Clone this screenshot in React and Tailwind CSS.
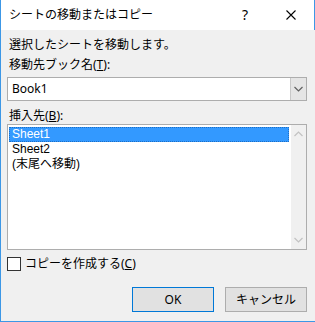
import React from "react";

const font = { fontFamily: '"Noto Sans", "Noto Sans CJK JP", sans-serif' };
const listFont = { fontFamily: '"Liberation Sans", "Noto Sans CJK JP", sans-serif' };

const Chevron = ({ up, color }) => (
  <svg width="9" height="6" viewBox="0 0 9 6" fill="none">
    <path
      d={up ? "M0.5 5L4.5 1L8.5 5" : "M0.5 1L4.5 5L8.5 1"}
      stroke={color}
      strokeWidth="1.2"
    />
  </svg>
);

const App = () => {
  return (
    <div
      className="w-[315px] h-[322px] flex flex-col bg-[#f0f0f0] text-[12px] text-black border-l border-b border-[#3c97e6] overflow-hidden"
      style={font}
    >
      {/* Title bar */}
      <div className="h-[30px] bg-white flex items-center border-r border-[#3c97e6] shrink-0">
        <span className="pl-[8px] leading-[16px] flex-1">シートの移動またはコピー</span>
        <span className="w-[12px] text-[14px] leading-[16px] mr-[32px]">?</span>
        <svg className="mr-[18px]" width="10" height="10" viewBox="0 0 10 10">
          <path d="M0.5 0.5L9.5 9.5M9.5 0.5L0.5 9.5" stroke="#000" strokeWidth="1.1" />
        </svg>
      </div>

      {/* Body */}
      <div className="flex flex-col pl-[6px] pr-[8px]">
        <div className="mt-[7px] leading-[16px] pl-[2px]">選択したシートを移動します。</div>
        <div className="mt-[4px] leading-[16px] pl-[2px]">
          移動先ブック名(<span className="underline">T</span>):
        </div>

        {/* Combobox */}
        <div className="mt-[4px] h-[24px] flex bg-white border border-[#adadad]">
          <div className="flex-1 pl-[4px] flex items-center leading-[16px]">Book1</div>
          <div className="w-[16px] flex items-center justify-center bg-[#e5e5e5] border-l border-[#c8c8c8]">
            <Chevron color="#606060" />
          </div>
        </div>

        <div className="mt-[7px] leading-[16px] pl-[2px]">
          挿入先(<span className="underline">B</span>):
        </div>

        {/* Listbox */}
        <div className="h-[126px] flex bg-white border border-[#adadad]">
          <div className="flex-1 pt-[2px] pl-[1px] pr-[2px]" style={listFont}>
            <div className="h-[15px] leading-[13px] pl-[2px] bg-[#3399ff] text-white border border-dotted border-[#1e6fc5]">
              Sheet1
            </div>
            <div className="h-[15px] leading-[15px] pl-[3px]">Sheet2</div>
            <div className="h-[15px] leading-[15px] pl-[3px]">(末尾へ移動)</div>
          </div>
          <div className="w-[15px] bg-[#f0f0f0] flex flex-col items-center justify-between py-[6px]">
            <Chevron up color="#c2c2c2" />
            <Chevron color="#c2c2c2" />
          </div>
        </div>

        {/* Checkbox */}
        <div className="mt-[7px] flex items-center h-[14px]">
          <div className="w-[14px] h-[14px] bg-white border border-[#333333]" />
          <span className="ml-[4px] leading-[16px]">
            コピーを作成する(<span className="underline">C</span>)
          </span>
        </div>

        {/* Buttons */}
        <div className="mt-[16px] flex justify-end gap-[11px]">
          <button className="w-[82px] h-[25px] bg-[#e1e1e1] border border-[#0078d7] leading-[16px]">
            OK
          </button>
          <button className="w-[82px] h-[25px] bg-[#e1e1e1] border border-[#adadad] leading-[16px]">
            キャンセル
          </button>
        </div>
      </div>
    </div>
  );
};

export default App;
